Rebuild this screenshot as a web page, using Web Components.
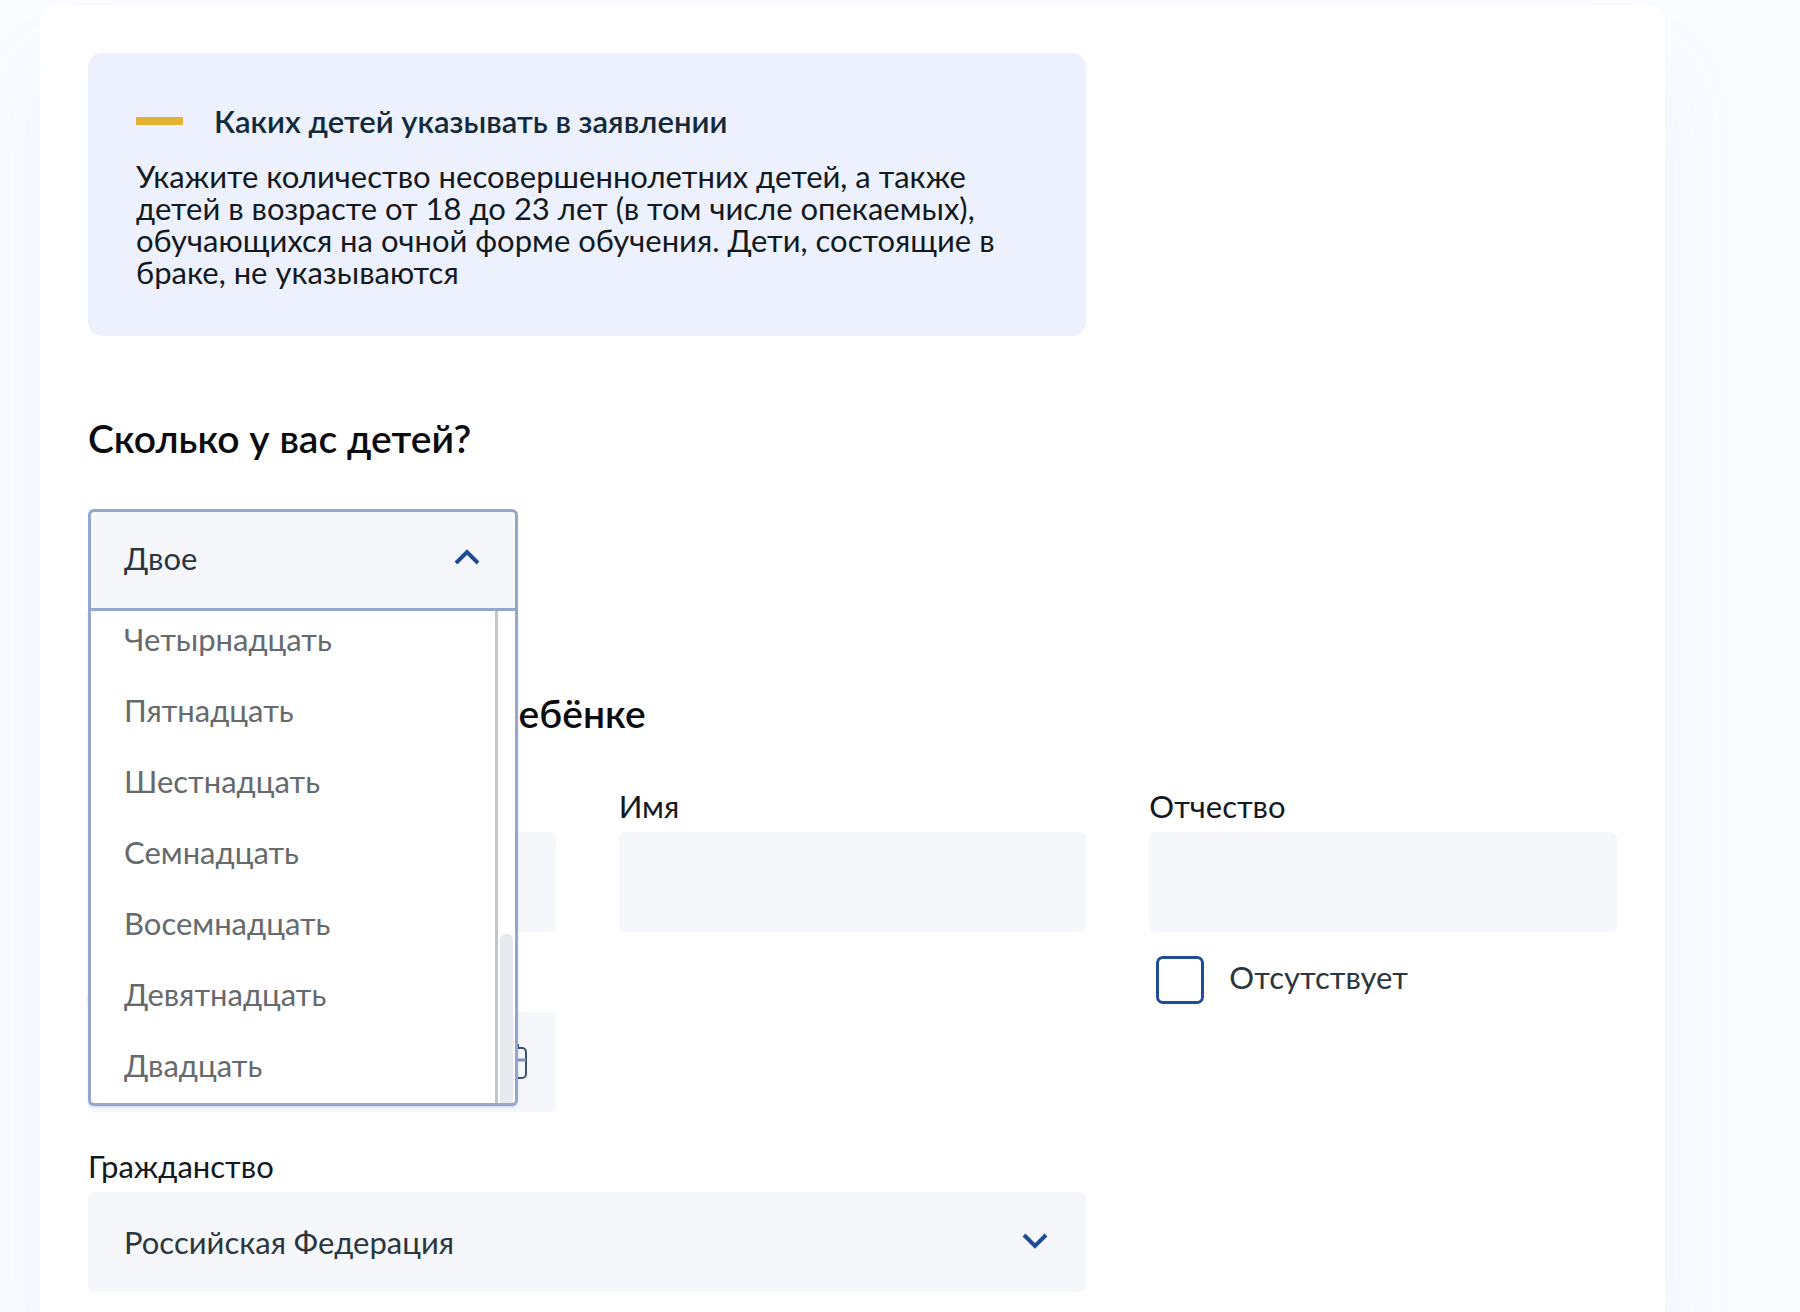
<!DOCTYPE html>
<html lang="ru">
<head>
<meta charset="utf-8">
<meta name="viewport" content="width=device-width, initial-scale=1">
<title>Заявление</title>
<style>
  body {
    margin: 0;
    background: #fafbff;
    color: #0b1f33;
    font: 400 31px/36px Lato, "Open Sans", sans-serif;
    --field: #f5f7fb;
    --accent: #1f4b99;
    --outline: #95a8cb;
    --ink: #131920;
  }
</style>
</head>
<body>
<children-form></children-form>

<template id="t-form">
  <style>
    :host { display: block; padding: 5px 135px 0 40px; }
    main {
      box-sizing: border-box;
      min-height: calc(100vh - 5px);
      padding: 48px 48px 20px;
      background: #fff;
      border-radius: 16px 16px 0 0;
      box-shadow: 0 60px 80px rgba(120, 165, 240, .08);
    }
    .grid { display: grid; grid-template-columns: repeat(3, minmax(0, 1fr)); gap: 36px 63px; }
    .wide { grid-column: span 2; }
    .column { display: flex; flex-direction: column; gap: 36px; }
    .column.tight { gap: 24px; }
    h2 { margin: 78px 0 0; font-size: 39px; line-height: 48px; font-weight: 600; color: #0b0c0f; }
    count-select { margin-top: 47px; }
    .people { margin-top: 51px; }
  </style>
  <main>
    <div class="grid">
      <info-note class="wide">
        <span slot="title">Каких детей указывать в заявлении</span>
        Укажите количество несовершеннолетних детей, а также детей в возрасте от 18 до 23 лет (в том числе опекаемых), обучающихся на очной форме обучения. Дети, состоящие в браке, не указываются
      </info-note>
    </div>
    <h2>Сколько у вас детей?</h2>
    <count-select></count-select>
    <h2>Информация о вашем ребёнке</h2>
    <div class="grid people">
      <div class="column">
        <text-field label="Фамилия"></text-field>
        <text-field label="Дата рождения" icon="calendar"></text-field>
      </div>
      <div class="column"><text-field label="Имя"></text-field></div>
      <div class="column tight">
        <text-field label="Отчество"></text-field>
        <check-field>Отсутствует</check-field>
      </div>
      <select-field class="wide" label="Гражданство" value="Российская Федерация"></select-field>
    </div>
  </main>
</template>

<template id="t-note">
  <style>
    :host { display: block; padding: 48px; background: #edf1fd; border-radius: 14px; }
    header { display: flex; align-items: center; gap: 31px; }
    header::before { content: ""; width: 47px; height: 8px; background: #e3b136; }
    h3 { margin: 0; font-size: 31px; line-height: 40px; font-weight: 600; color: #132a3a; }
    p { margin: 19px 0 0; line-height: 32px; color: var(--ink); }
  </style>
  <header><h3><slot name="title"></slot></h3></header>
  <p><slot></slot></p>
</template>

<template id="t-count">
  <style>
    :host { display: block; position: relative; width: 430px; max-width: 100%; }
    .head { display: grid; align-items: center; }
    select, svg { grid-area: 1 / 1; }
    select {
      appearance: none; box-sizing: border-box; width: 100%; height: 102px; margin: 0;
      padding: 0 80px 4px 33px; border: 3px solid var(--outline); border-radius: 6px 6px 0 0;
      background: var(--field); font: inherit; color: #2b3640; outline: none;
    }
    svg { justify-self: end; margin: 0 37px 4px 0; pointer-events: none; }
    .menu {
      position: absolute; z-index: 2; top: 100%; left: 0; right: 0; box-sizing: border-box;
      display: flex; background: #fff; border: 3px solid var(--outline); border-top: 0;
      border-radius: 0 0 6px 6px; box-shadow: 0 1px 2px rgba(80, 110, 170, .25);
    }
    ul { flex: 1; margin: 0; padding: 0; list-style: none; }
    li { padding: 10px 33px 25px; color: #666a6d; }
    li:last-child { padding-bottom: 20px; }
    .track {
      box-sizing: border-box; width: 20px; padding: 0 2px; border-left: 3px solid #c4c5c7;
      display: flex; flex-direction: column; justify-content: flex-end;
    }
    .track::after { content: ""; height: 169px; border-radius: 6px 6px 0 0; background: #e6eaee; }
  </style>
  <div class="head">
    <select aria-label="Сколько у вас детей?"><option>Двое</option></select>
    <svg width="28" height="28" viewBox="0 0 28 28" fill="none" stroke="#1f4b99" stroke-width="4" aria-hidden="true"><path d="M3 19 14 8l11 11"/></svg>
  </div>
  <div class="menu">
    <ul role="listbox" aria-label="Количество детей">
      <li role="option">Четырнадцать</li>
      <li role="option">Пятнадцать</li>
      <li role="option">Шестнадцать</li>
      <li role="option">Семнадцать</li>
      <li role="option">Восемнадцать</li>
      <li role="option">Девятнадцать</li>
      <li role="option">Двадцать</li>
    </ul>
    <div class="track"></div>
  </div>
</template>

<template id="t-text">
  <style>
    :host { display: flex; flex-direction: column; gap: 8px; }
    label { color: var(--ink); }
    .box { display: grid; align-items: center; }
    input, svg { grid-area: 1 / 1; }
    input {
      box-sizing: border-box; width: 100%; height: 100px; margin: 0; padding: 0 36px;
      border: 0; border-radius: 6px; background: var(--field); font: inherit; color: #2b3640; outline: none;
    }
    svg { display: none; justify-self: end; margin-right: 28px; }
    :host([icon="calendar"]) svg { display: block; }
  </style>
  <label for="c"></label>
  <div class="box">
    <input id="c" type="text">
    <svg width="30" height="36" viewBox="0 0 30 36" fill="none" stroke="#3a5078" stroke-width="2" aria-hidden="true"><rect x="2" y="4" width="26" height="30" rx="4"/><path d="M2 16h26" stroke="#7f94bd" stroke-width="3"/><path d="M9 0v7M20 0v4"/></svg>
  </div>
</template>

<template id="t-select">
  <style>
    :host { display: flex; flex-direction: column; gap: 8px; }
    label { color: var(--ink); }
    .box { display: grid; align-items: center; }
    select, svg { grid-area: 1 / 1; }
    select {
      appearance: none; box-sizing: border-box; width: 100%; height: 100px; margin: 0; padding: 0 80px 0 36px;
      border: 0; border-radius: 6px; background: var(--field); font: inherit; color: #2b3640; outline: none;
    }
    svg { justify-self: end; margin-right: 37px; pointer-events: none; }
  </style>
  <label for="c"></label>
  <div class="box">
    <select id="c"></select>
    <svg width="28" height="28" viewBox="0 0 28 28" fill="none" stroke="#1f4b99" stroke-width="4" aria-hidden="true"><path d="M3 7l11 11L25 7"/></svg>
  </div>
</template>

<template id="t-check">
  <style>
    :host { display: block; padding-left: 7px; }
    label { display: flex; align-items: flex-start; gap: 25px; line-height: 42px; color: #2b3640; }
    input {
      appearance: none; box-sizing: border-box; flex: none; width: 48px; height: 48px; margin: 0;
      border: 3px solid var(--accent); border-radius: 7px; background: #fff;
    }
  </style>
  <label><input type="checkbox"><span><slot></slot></span></label>
</template>

<script>
  class Base extends HTMLElement {
    constructor() {
      super();
      const source = document.getElementById(this.constructor.template);
      this.attachShadow({ mode: "open" }).append(source.content.cloneNode(true));
    }
  }
  class InfoNote extends Base { static template = "t-note"; }
  class CountSelect extends Base { static template = "t-count"; }
  class CheckField extends Base { static template = "t-check"; }
  class TextField extends Base {
    static template = "t-text";
    connectedCallback() {
      this.shadowRoot.querySelector("label").textContent = this.getAttribute("label");
    }
  }
  class SelectField extends Base {
    static template = "t-select";
    connectedCallback() {
      this.shadowRoot.querySelector("label").textContent = this.getAttribute("label");
      this.shadowRoot.querySelector("select").replaceChildren(new Option(this.getAttribute("value")));
    }
  }
  class ChildrenForm extends Base { static template = "t-form"; }
  customElements.define("info-note", InfoNote);
  customElements.define("count-select", CountSelect);
  customElements.define("check-field", CheckField);
  customElements.define("text-field", TextField);
  customElements.define("select-field", SelectField);
  customElements.define("children-form", ChildrenForm);
</script>
</body>
</html>
